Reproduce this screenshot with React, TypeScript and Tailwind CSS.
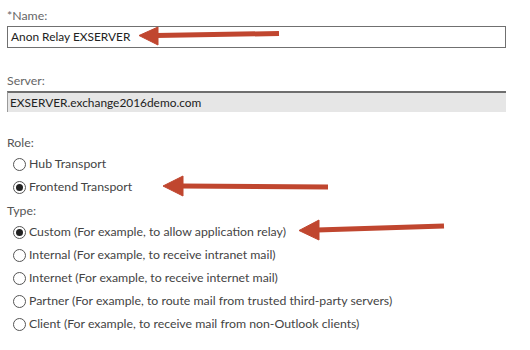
const font = { fontFamily: 'Lato, "Open Sans", "Noto Sans", sans-serif' };

function Radio({ checked, label }: { checked?: boolean; label: string }) {
  return (
    <div className="flex items-center h-[23px] pl-[6px]">
      <span className="flex items-center justify-center w-[13px] h-[13px] rounded-full border border-[#555] bg-white">
        {checked && <span className="w-[7px] h-[7px] rounded-full bg-[#222]" />}
      </span>
      <span className="ml-[3px] text-[12.3px] text-[#444]">{label}</span>
    </div>
  );
}

const roles = [
  { label: 'Hub Transport' },
  { label: 'Frontend Transport', checked: true },
];

const types = [
  { label: 'Custom (For example, to allow application relay)', checked: true },
  { label: 'Internal (For example, to receive intranet mail)' },
  { label: 'Internet (For example, to receive internet mail)' },
  { label: 'Partner (For example, to route mail from trusted third-party servers)' },
  { label: 'Client (For example, to receive mail from non-Outlook clients)' },
];

export default function App() {
  return (
    <div className="relative w-[530px] h-[350px] bg-white overflow-hidden" style={font}>
      <div className="flex flex-col pl-[7px] pt-[6px] w-[506px]">
        <div className="text-[12.3px] text-[#666] h-[20px] leading-[20px]">*Name:</div>
        <div className="h-[22px] border border-[#707070] bg-white flex items-center pl-[3px] text-[11.9px] text-[#222]">
          Anon Relay EXSERVER
        </div>

        <div className="text-[12.3px] text-[#666] h-[20px] leading-[20px] mt-[23px]">Server:</div>
        <div className="h-[21px] border-t-2 border-l border-t-[#6e6e6e] border-l-[#9a9a9a] bg-[#e6e6e6] flex items-center pl-[2px] text-[11.9px] text-[#222]">
          EXSERVER.exchange2016demo.com
        </div>

        <div className="text-[12.3px] text-[#555] h-[20px] leading-[20px] mt-[21px]">Role:</div>
        <div className="flex flex-col">
          {roles.map((r, i) => (
            <Radio key={i} label={r.label} checked={r.checked} />
          ))}
        </div>

        <div className="text-[12.3px] text-[#555] h-[20px] leading-[20px] mt-[2px]">Type:</div>
        <div className="flex flex-col">
          {types.map((t, i) => (
            <Radio key={i} label={t.label} checked={t.checked} />
          ))}
        </div>
      </div>

      {/* red callout arrows over the form */}
      <svg className="absolute left-0 top-0 pointer-events-none" width="530" height="350">
        <g fill="#c0462f" stroke="#c0462f" strokeLinejoin="round">
          <line x1="156" y1="35.5" x2="279" y2="33.5" strokeWidth="5" />
          <polygon points="139,35.5 158,27 158,45" strokeWidth="1" />
          <line x1="181" y1="186" x2="328" y2="187" strokeWidth="5" />
          <polygon points="163,186 183,176 183,196" strokeWidth="1" />
          <line x1="317" y1="230" x2="444" y2="226" strokeWidth="5" />
          <polygon points="299,230.5 319,220 319,240" strokeWidth="1" />
        </g>
      </svg>
    </div>
  );
}
